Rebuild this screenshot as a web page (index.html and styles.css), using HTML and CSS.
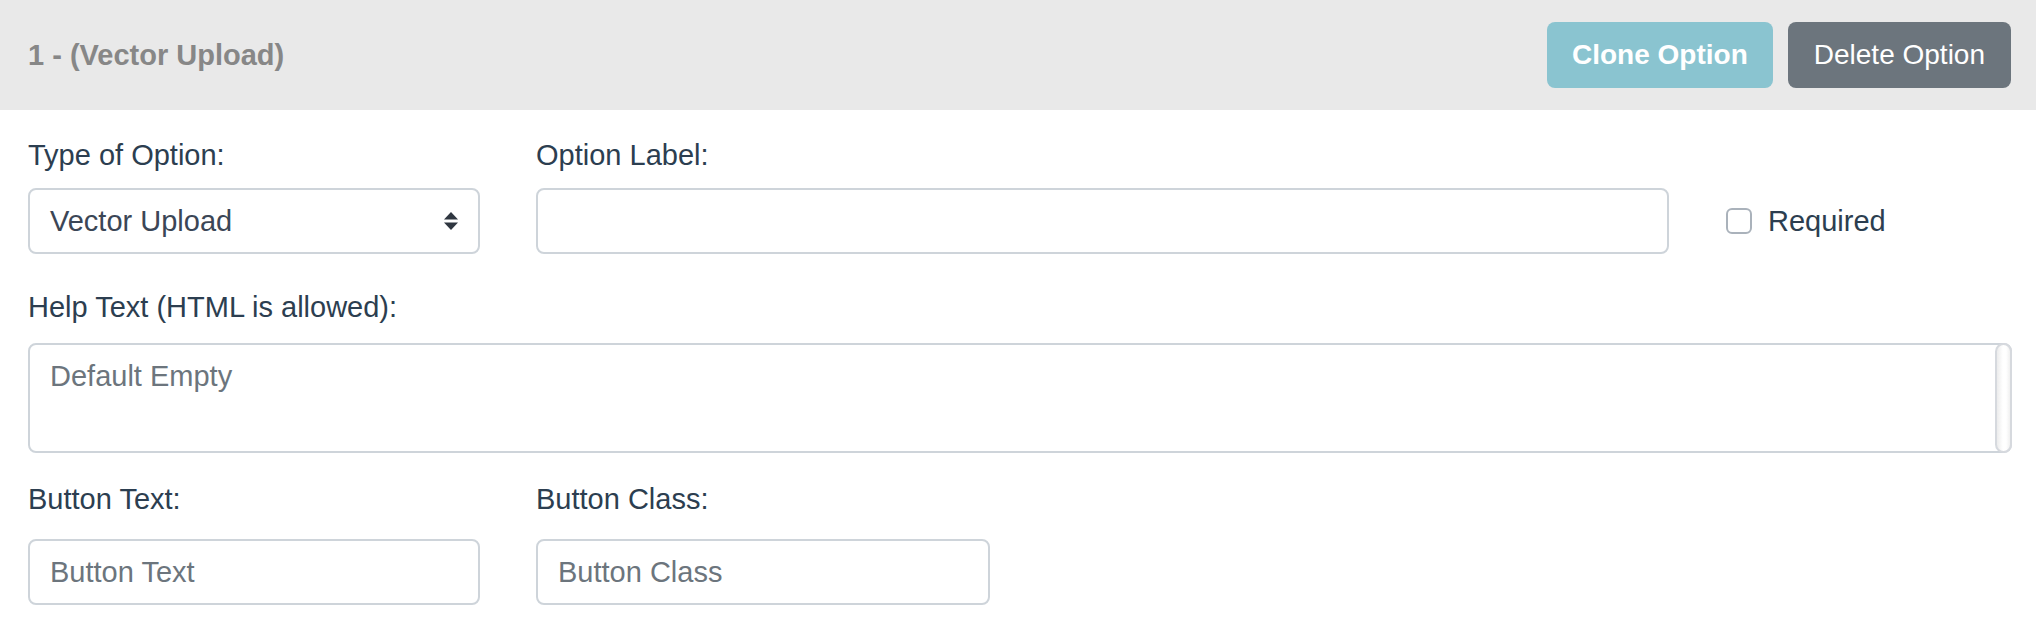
FILE: index.html
```html
<!DOCTYPE html>
<html lang="en">
<head>
<meta charset="utf-8">
<title>Option</title>
<link rel="stylesheet" href="styles.css">
</head>
<body>
<div class="card">
  <div class="card-header">
    <h5 class="title">1 - (Vector Upload)</h5>
    <div class="actions">
      <button class="btn btn-clone" type="button">Clone Option</button>
      <button class="btn btn-delete" type="button">Delete Option</button>
    </div>
  </div>
  <div class="card-body">
    <div class="row row-top">
      <div class="field">
        <label class="label">Type of Option:</label>
        <div class="control select">
          <span class="select-value">Vector Upload</span>
          <svg class="select-arrows" width="14" height="18" viewBox="0 0 14 18" aria-hidden="true">
            <path d="M7 0 L14 7.5 L0 7.5 Z" fill="#2f3640"/>
            <path d="M7 18 L14 10.5 L0 10.5 Z" fill="#2f3640"/>
          </svg>
        </div>
      </div>
      <div class="field">
        <label class="label">Option Label:</label>
        <input class="control" type="text">
      </div>
      <label class="check">
        <span class="check-box"></span>
        <span class="check-text">Required</span>
      </label>
    </div>
    <div class="field field-full">
      <label class="label">Help Text (HTML is allowed):</label>
      <div class="textarea-wrap">
        <textarea class="control textarea" placeholder="Default Empty"></textarea>
        <span class="scroll-track" aria-hidden="true"></span>
      </div>
    </div>
    <div class="row row-bottom">
      <div class="field">
        <label class="label">Button Text:</label>
        <input class="control" type="text" placeholder="Button Text">
      </div>
      <div class="field">
        <label class="label">Button Class:</label>
        <input class="control" type="text" placeholder="Button Class">
      </div>
    </div>
  </div>
</div>
</body>
</html>
```

FILE: styles.css
```css
html, body {
  margin: 0;
  padding: 0;
  background: #ffffff;
}

body {
  font-family: "Liberation Sans", Arial, Helvetica, sans-serif;
  font-size: 29px;
  line-height: 42px;
  color: #2c3e50;
}

.card {
  width: 2036px;
}

.card-header {
  display: flex;
  align-items: center;
  justify-content: space-between;
  height: 110px;
  box-sizing: border-box;
  padding: 0 25px 0 28px;
  background: #e9e9e9;
}

.title {
  margin: 0;
  font-size: 29px;
  font-weight: bold;
  color: #878787;
  line-height: 42px;
}

.actions {
  display: flex;
  gap: 15px;
}

.btn {
  font-family: inherit;
  font-size: 28px;
  line-height: 42px;
  height: 66px;
  padding: 0 25px;
  border: none;
  border-radius: 8px;
  color: #ffffff;
  cursor: pointer;
}

.btn-clone {
  background: #8ac4d0;
  font-weight: bold;
}

.btn-delete {
  background: #6c757d;
  font-weight: normal;
  padding: 0 26px;
}

.card-body {
  padding: 24px 24px 0 28px;
}

.row {
  display: grid;
  column-gap: 56px;
  align-items: end;
}

.row-top {
  grid-template-columns: 452px 1133px 1fr;
}

.row-bottom {
  grid-template-columns: 452px 454px;
  margin-top: 25px;
}

.field {
  display: flex;
  flex-direction: column;
}

.field-full {
  margin-top: 32px;
}

.label {
  display: block;
  margin-bottom: 12px;
  color: #2c3e50;
}

.row-bottom .label {
  margin-bottom: 19px;
}

.control {
  box-sizing: border-box;
  height: 66px;
  border: 2px solid #ced4da;
  border-radius: 8px;
  background: #ffffff;
  font-family: inherit;
  font-size: 29px;
  color: #3b4656;
  padding: 0 20px;
  outline: none;
}

.control::placeholder {
  color: #6c757d;
}

.select {
  display: flex;
  align-items: center;
  justify-content: space-between;
  padding-right: 20px;
}

.select-value {
  color: #3b4656;
}

.select-arrows {
  display: block;
}

.textarea-wrap {
  position: relative;
  margin-top: 3px;
}

.textarea {
  display: block;
  width: 100%;
  height: 110px;
  padding: 10px 20px;
  line-height: 42px;
  resize: none;
  overflow: hidden;
}

.scroll-track {
  position: absolute;
  top: 0;
  right: 0;
  bottom: 0;
  width: 17px;
  box-sizing: border-box;
  border: 2px solid #d6d9de;
  border-radius: 9px;
  background: linear-gradient(to right, #ececec, #ffffff 45%, #ffffff 70%, #f0f0f0);
}

.check {
  display: flex;
  align-items: center;
  gap: 16px;
  height: 66px;
  margin-left: 1px;
}

.check-box {
  box-sizing: border-box;
  width: 26px;
  height: 26px;
  border: 2px solid #aab2bb;
  border-radius: 6px;
  background: #ffffff;
}

.check-text {
  color: #2c3e50;
}
```
